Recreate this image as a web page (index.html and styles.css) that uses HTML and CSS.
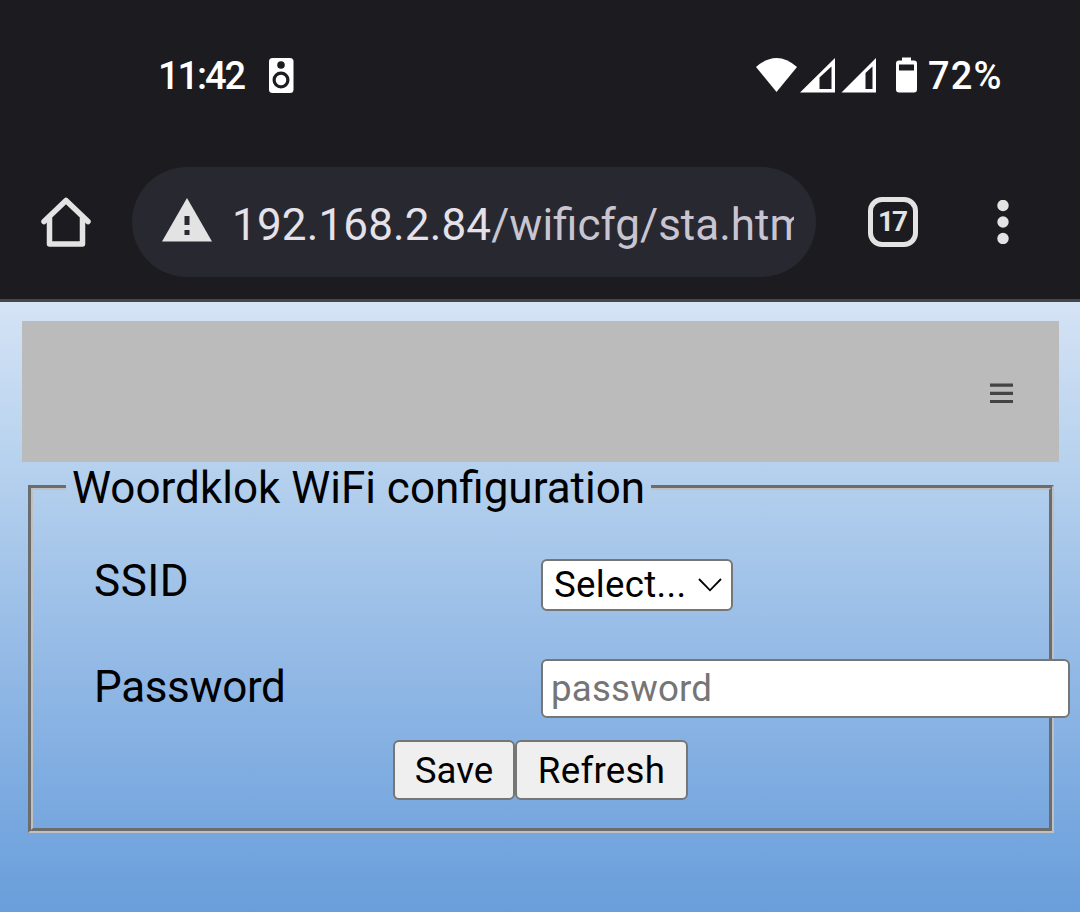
FILE: index.html
```html
<!DOCTYPE html>
<html lang="en">
<head>
<meta charset="utf-8">
<title>Woordklok WiFi configuration</title>
<link rel="stylesheet" href="styles.css">
</head>
<body>
<header class="chrome">
  <div class="status">
    <span class="clock">11:42</span>
    <svg class="speaker" width="26" height="36" viewBox="0 0 26 36"><rect x="1" y="1" width="24.500" height="35" rx="3.5" fill="#fff"/><circle cx="13" cy="8" r="3.8" fill="#1c1b1f"/><circle cx="13" cy="23" r="6.9" fill="#fff" stroke="#1c1b1f" stroke-width="3.2"/></svg>
    <svg class="signals" width="164" height="36" viewBox="0 0 164 36" fill="#fff"><path d="M0 10Q20.500-8 41 10L20.500 35Z"/><path fill-rule="evenodd" d="M44 35.500L79 1V35.500ZM63.500 20.500V32H75.500V9.500Z"/><path fill-rule="evenodd" d="M85.500 35.500L120 1V35.500ZM109.500 16V32H116.500V9.500Z"/><path fill-rule="evenodd" d="M146 .5h9v3h3q3 0 3 3v26q0 3-3 3h-15q-3 0-3-3V6.500q0-3 3-3h3ZM143 7.500v6h15v-6Z"/></svg>
    <span class="percent">72%</span>
  </div>
  <div class="toolbar">
    <svg class="home" width="50" height="50" viewBox="0 0 50 50" fill="none" stroke="#e3e3e3" stroke-width="5.500" stroke-linecap="round" stroke-linejoin="round"><path d="M3 24.500L25 3.500L47 24.500"/><path d="M8.500 21V47H41.500V21"/></svg>
    <div class="omnibox">
      <svg class="warning" width="50" height="44" viewBox="0 0 50 44"><path d="M25 0L50 43.500H0Z" fill="#e3e3e3"/><path d="M22.500 18h5v9h-5zM22.500 32h5v5h-5z" fill="#282831"/></svg>
      <div class="url"><span class="host">192.168.2.84</span>/wificfg/sta.htm</div>
    </div>
    <div class="tabs">17</div>
    <svg class="more" width="12" height="44" viewBox="0 0 12 44" fill="#e3e3e3"><circle cx="6" cy="5.500" r="5.700"/><circle cx="6" cy="22" r="5.700"/><circle cx="6" cy="38.500" r="5.700"/></svg>
  </div>
</header>
<main class="page">
  <nav class="menubar"><svg width="23" height="21" viewBox="0 0 23 21" fill="#444"><path d="M0 .5h23v3.200H0zM0 8.700h23v3.200H0zM0 16.900h23v3.200H0z"/></svg></nav>
  <fieldset class="config">
    <legend>Woordklok WiFi configuration</legend>
    <div class="row"><label class="ssid">SSID</label><div class="select">Select...<svg width="24" height="14" viewBox="0 0 24 14" fill="none" stroke="#000" stroke-width="1.800"><path d="M1 1L12 12.300L23 1"/></svg></div></div>
    <div class="row second"><label>Password</label><input class="password" type="password" placeholder="password"></div>
    <div class="actions"><button class="save">Save</button><button class="refresh">Refresh</button></div>
  </fieldset>
</main>
</body>
</html>
```
FILE: styles.css
```css
* { box-sizing: border-box; }
body { margin: 0; height: 912px; overflow: hidden; font-family: Roboto, sans-serif; font-size: 44px; color: #000; display: flex; flex-direction: column; }
svg { display: block; flex: none; }
.chrome { height: 302px; flex: none; background: #1c1b1f; border-bottom: 3px solid #46464b; }
.status { height: 167px; display: flex; align-items: flex-start; padding: 57px 0 0 158px; color: #fff; font: 500 38px/38px Roboto, sans-serif; }
.clock { width: 110px; white-space: nowrap; letter-spacing: -2.1px; }
.percent { letter-spacing: 1.2px; }
.speaker { margin-right: 462px; }
.signals { margin-right: 8px; }
.toolbar { display: flex; align-items: center; height: 110px; padding-left: 41px; }
.omnibox { margin: 0 52px 0 41px; width: 684px; height: 110px; border-radius: 55px; background: #282831; display: flex; align-items: center; padding: 0 22px 0 30px; flex: none; }
.warning { margin: -5px 20px 0 0; }
.url { flex: 1; overflow: hidden; white-space: nowrap; line-height: 60px; color: #c8c5d0; padding-top: 5px; }
.host { color: #e5e1e9; letter-spacing: .15px; }
.tabs { width: 50px; height: 50px; border: 5.500px solid #e3e3e3; border-radius: 14px; color: #e3e3e3; font-size: 28px; line-height: 40px; font-weight: 700; text-align: center; letter-spacing: -2px; padding-right: 2px; flex: none; }
.more { margin-left: 79px; }
.page { flex: 1; padding: 19px 21px 0 22px; background: linear-gradient(#d5e3f5 0, #b7d2ee 26%, #9dc0e8 50%, #80ade1 77%, #699edb 100%); }
.menubar { height: 141px; background: #bbb; display: flex; justify-content: flex-end; align-items: center; padding: 3px 46px 0 0; }
.config { margin: 0 5px 0 6px; width: 1026px; height: 371px; border: 5px groove #c0c0c0; padding: 0 0 0 33px; min-width: 0; }
legend { padding: 2px 6px 0; line-height: 49px; white-space: nowrap; }
.row { display: flex; padding-left: 28px; height: 51px; margin-top: 46px; align-items: center; }
.row label { width: 447px; flex: none; line-height: 52px; padding-bottom: 7px; letter-spacing: -.35px; }
.row .ssid { letter-spacing: .5px; }
.select { width: 192px; height: 52px; border: 2px solid #767676; border-radius: 6px; background: #fff; font-size: 36.667px; letter-spacing: .3px; display: flex; align-items: center; justify-content: space-between; padding: 0 9px 0 11px; }
.second { margin-top: 49px; height: 58px; }
.second label { padding-bottom: 3px; }
.password { width: 529px; height: 59px; flex: none; border: 2px solid #767676; border-radius: 6px; background: #fff; font: 36.667px Roboto, sans-serif; letter-spacing: .2px; padding: 0 8px; }
.password::placeholder { color: #757575; }
.actions { display: flex; margin: 23px 0 0 327px; }
button { height: 60px; border: 2px solid #767676; border-radius: 6px; background: #efefef; font: 36.667px Roboto, sans-serif; color: #000; padding: 0; }
.save { width: 122px; }
.refresh { width: 173px; letter-spacing: .3px; }
```
